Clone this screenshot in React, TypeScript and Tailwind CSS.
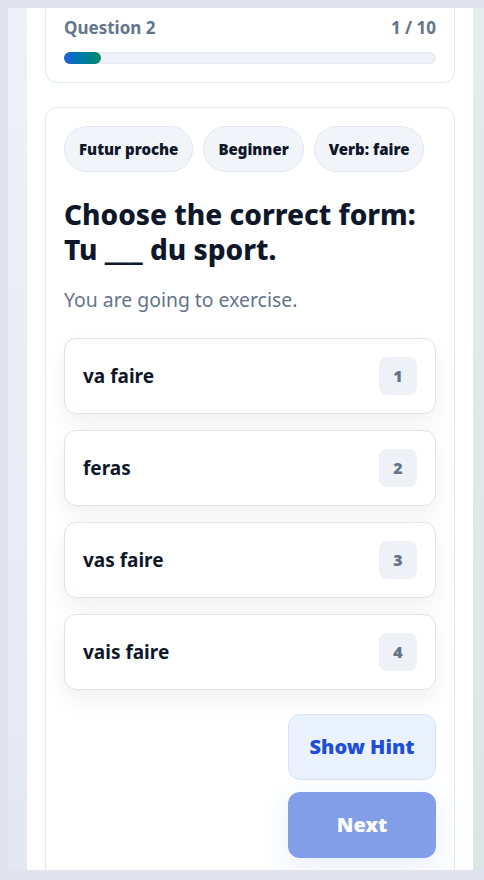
const options = ['va faire', 'feras', 'vas faire', 'vais faire'];
const tags = ['Futur proche', 'Beginner', 'Verb: faire'];

export default function App() {
  const current = 1;
  const total = 10;

  return (
    <div
      className="h-[880px] overflow-hidden bg-[#e1e3ee] pt-2 pl-2 pb-[10px]"
      style={{ fontFamily: '"Noto Sans", "Open Sans", sans-serif' }}
    >
      <div className="flex h-full">
        <div className="w-[19px] bg-gradient-to-b from-[#eef1f7] to-[#e4e8f0]" />
        <div className="w-[446px] overflow-hidden bg-white px-[18px]">
          {/* Progress */}
          <div className="-mt-[11px] rounded-xl border border-[#e2e8f0] bg-white px-[18px] pt-[18px] pb-[18px]">
            <div className="flex items-center justify-between text-[17px] leading-6 font-bold text-[#64748b]">
              <span>Question 2</span>
              <span>
                {current} / {total}
              </span>
            </div>
            <div className="mt-3 h-3 w-full rounded-full border border-[#e5eaf1] bg-[#eef2f7]">
              <div
                className="-mt-px -ml-px h-3 rounded-full bg-gradient-to-r from-[#1d5fd8] to-[#0f8a68]"
                style={{ width: `${(current / total) * 100}%` }}
              />
            </div>
          </div>

          {/* Question */}
          <div className="mt-6 rounded-xl border border-[#e2e8f0] bg-white px-[18px] pt-[18px] pb-10">
            <div className="flex gap-[10px]">
              {tags.map((tag) => (
                <span
                  key={tag}
                  className="flex h-[46px] items-center rounded-full border border-[#e2e8f0] bg-[#f1f5f9] px-[14px] text-[15px] font-black text-[#0f172a]"
                >
                  {tag}
                </span>
              ))}
            </div>

            <h1 className="mt-[25px] text-[28px] leading-[35px] font-extrabold text-[#0f172a]">
              Choose the correct form:
              <br />
              Tu ___ du sport.
            </h1>
            <p className="mt-[19px] text-[19.4px] leading-7 text-[#64748b]">You are going to exercise.</p>

            <div className="mt-6 flex flex-col gap-4">
              {options.map((opt, i) => (
                <button
                  key={opt}
                  className="flex h-[76px] items-center justify-between rounded-xl border border-[#dde4ee] bg-white pr-[18px] pl-[18px] text-left shadow-[0_10px_24px_rgba(15,23,42,0.06)]"
                >
                  <span className="text-[19px] font-bold text-[#0f172a]">{opt}</span>
                  <span className="flex h-[38px] w-[38px] items-center justify-center rounded-lg bg-[#eef2f7] text-[16px] font-black text-[#64748b]">
                    {i + 1}
                  </span>
                </button>
              ))}
            </div>

            <div className="mt-6 flex flex-col items-end gap-3">
              <button className="h-[66px] w-[148px] rounded-xl border border-[#d7e3f8] bg-[#eaf2fe] text-[20px] font-black text-[#1d4ed8]">
                Show Hint
              </button>
              <button className="h-[66px] w-[148px] rounded-xl bg-[#829ee8] text-[20px] font-black text-white shadow-[0_8px_30px_rgba(59,100,230,0.12)]">
                Next
              </button>
            </div>
          </div>
        </div>
        <div className="flex-1 bg-gradient-to-b from-[#e6ebed] to-[#dde6e6]" />
      </div>
    </div>
  );
}
